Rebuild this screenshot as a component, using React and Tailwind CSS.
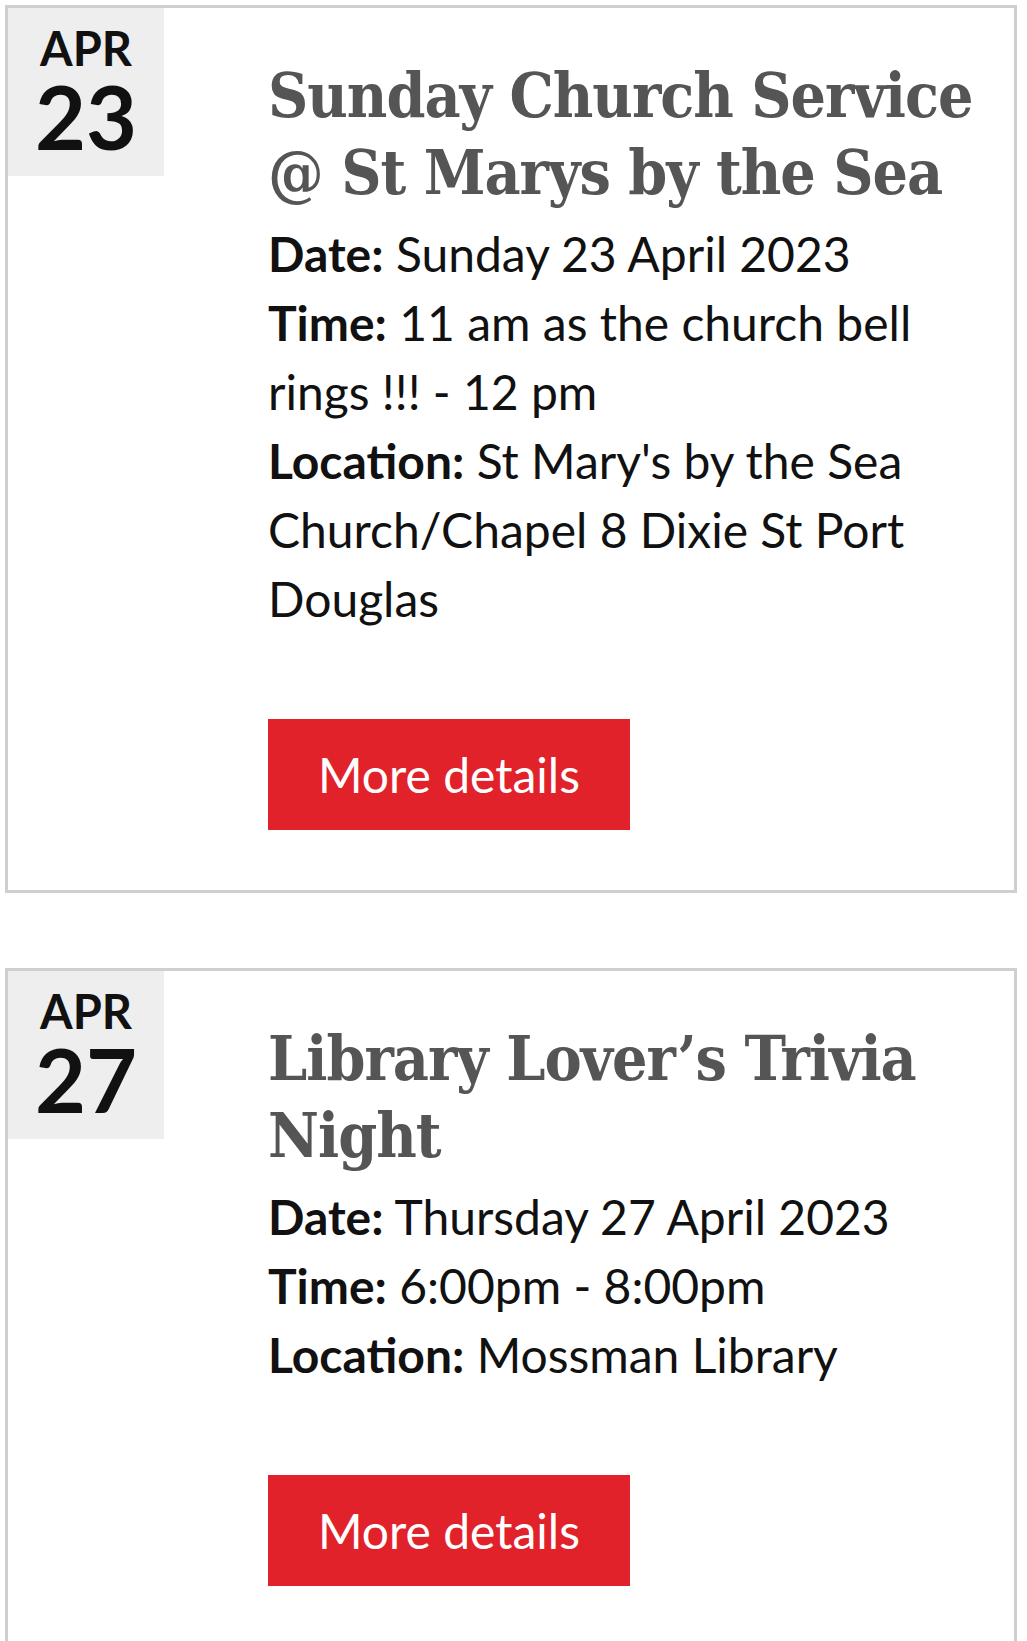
import React from "react";

const events = [
  {
    month: "APR",
    day: "23",
    title: "Sunday Church Service @ St Marys by the Sea",
    date: "Sunday 23 April 2023",
    time: "11 am as the church bell rings !!! - 12 pm",
    location: "St Mary's by the Sea Church/Chapel 8 Dixie St Port Douglas",
  },
  {
    month: "APR",
    day: "27",
    title: "Library Lover’s Trivia Night",
    date: "Thursday 27 April 2023",
    time: "6:00pm - 8:00pm",
    location: "Mossman Library",
  },
];

function EventCard({ event }) {
  return (
    <div className="flex items-start border-[3px] border-[#cfcfcf] bg-white">
      {/* date badge */}
      <div className="w-[156px] h-[168px] shrink-0 bg-[#eeeeee] flex flex-col items-center text-[#111] font-['Lato',sans-serif] font-bold">
        <span className="mt-[17px] text-[47px] leading-none">{event.month}</span>
        <span className="text-[88px] leading-none">{event.day}</span>
      </div>

      <div className="flex-1 ml-[104px] pr-[16px] pt-[49px] pb-[60px]">
        <h2 className="mb-[8px] text-[62px] leading-[77px] font-bold tracking-[-1px] text-[#555555] font-['DejaVu_Serif_Condensed','DejaVu_Serif',serif]">
          {event.title}
        </h2>
        <div className="text-[48px] leading-[69px] text-[#111] font-['Lato',sans-serif]">
          <p>
            <strong className="font-bold">Date:</strong> {event.date}
          </p>
          <p>
            <strong className="font-bold">Time:</strong> {event.time}
          </p>
          <p>
            <strong className="font-bold">Location:</strong> {event.location}
          </p>
        </div>
        <a
          href="#"
          className="mt-[86px] flex w-[362px] h-[111px] items-center justify-center bg-[#e2222a] text-white text-[48px] font-['Lato',sans-serif]"
        >
          More details
        </a>
      </div>
    </div>
  );
}

export default function App() {
  return (
    <div className="min-h-screen bg-white pt-[5px] pl-[5px] pr-[10px]">
      <div className="flex flex-col gap-[75px]">
        {events.map((ev, i) => (
          <EventCard key={i} event={ev} />
        ))}
      </div>
    </div>
  );
}
